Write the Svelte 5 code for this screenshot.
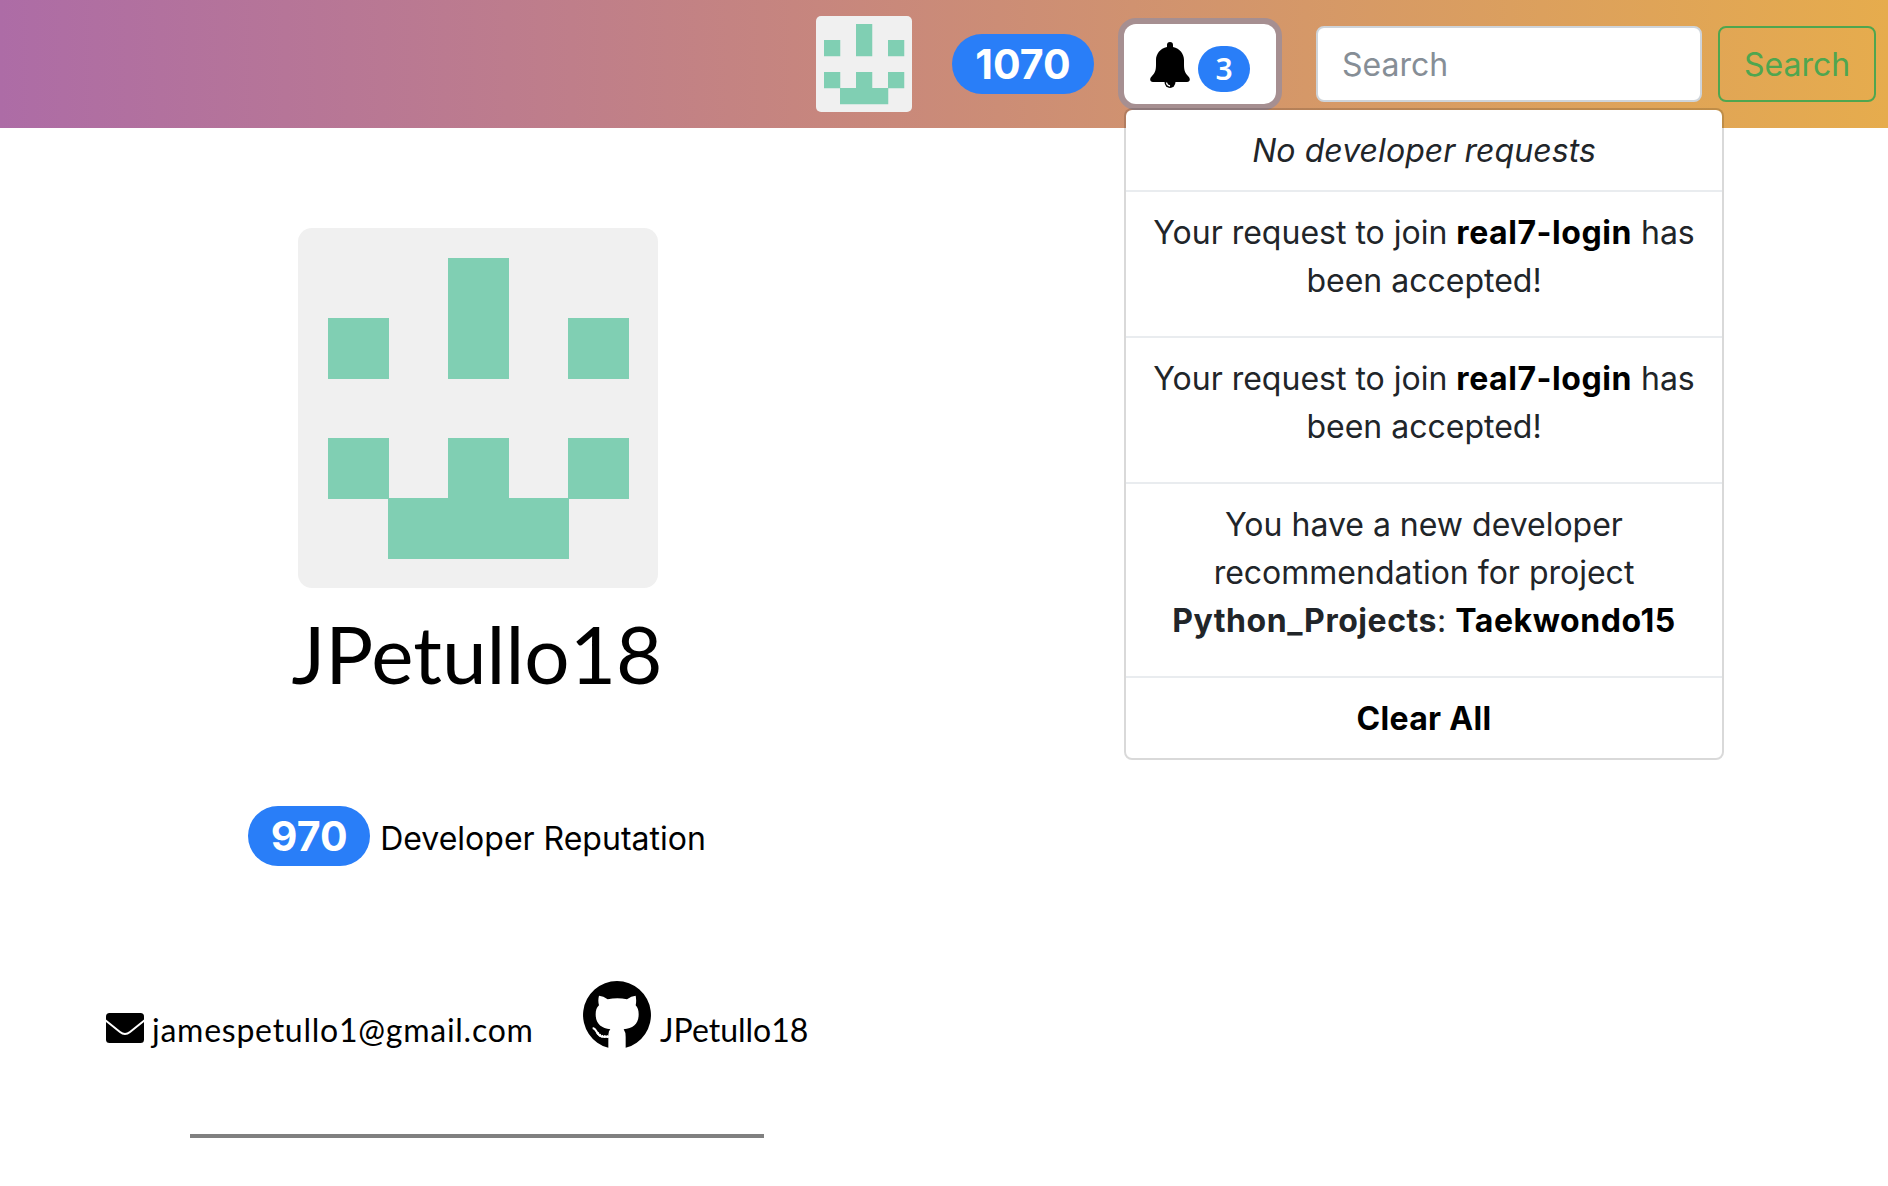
<script>
  const notices = [
    { before: 'Your request to join ', link: 'real7-login', after: ' has been accepted!' },
    { before: 'Your request to join ', link: 'real7-login', after: ' has been accepted!' }
  ];
</script>

{#snippet identicon()}
  <svg class="identicon" viewBox="0 0 360 360" aria-hidden="true">
    <rect width="360" height="360" fill="#f0f0f0" />
    <path fill="#80cfb3" d="M150 30h61v121h-61zM30 90h61v61H30zM270 90h61v61h-61zM30 210h61v61H30zM270 210h61v61h-61zM150 210h61v60h60v61H90v-61h60z" />
  </svg>
{/snippet}

<header class="navbar">
  <div class="nav-avatar">{@render identicon()}</div>
  <span class="badge score">1070</span>
  <div class="dropdown">
    <button class="bell-btn" aria-label="Notifications">
      <svg class="bell" viewBox="0 0 40 46">
        <path d="M20 0a3 3 0 0 0-3 3v2C10 6.500 6 12 6 18v5c0 6-1.500 8.500-4 11-3 3-2 6 1 6h34c3 0 4-3 1-6-2.500-2.500-4-5-4-11v-5c0-6-4-11.500-11-13V3a3 3 0 0 0-3-3z" />
        <path d="M14.500 40a5.500 6 0 0 0 11 0z" />
        <path d="M16.500 40.500q.3 3 3.500 3.500" fill="none" stroke="#fff" stroke-width="1.300" />
      </svg>
      <span class="badge count">3</span>
    </button>
    <div class="menu">
      <div class="item"><em>No developer requests</em></div>
      {#each notices as n}
        <div class="item"><p>{n.before}<b class="link">{n.link}</b>{n.after}</p></div>
      {/each}
      <div class="item">
        <p>You have a new developer recommendation for project <span class="pair"><b>Python_Projects</b>: <b class="link">Taekwondo15</b></span></p>
      </div>
      <div class="item"><b class="link clear">Clear All</b></div>
    </div>
  </div>
  <input class="search" placeholder="Search" />
  <button class="search-btn">Search</button>
</header>

<main class="profile">
  <div class="avatar">{@render identicon()}</div>
  <h1>JPetullo18</h1>
  <div class="reputation">
    <span class="badge dev">970</span>
    <span class="rep-label">Developer Reputation</span>
  </div>
  <div class="contacts">
    <svg class="mail" viewBox="0 0 38 30">
      <rect width="38" height="30" rx="3.500" />
      <path d="M-1 7 14 19q5 4 10 0L39 7" fill="none" stroke="#fff" stroke-width="2" />
    </svg>
    <span class="email">jamespetullo1@gmail.com</span>
    <svg class="github" viewBox="0 0 204 204">
      <path d="M102 0a102 102 0 0 1 26 200.600V168q0-15-6-23c28-3 45-16 45-45 0-12-3-20-9-27q3-13 0-29-13 0-26 11-29-6-58 0-13-11-26-11-4 15 0 29c-7 7-10 15-10 27 0 28 17 42 44 45q-5 4-6 16v39.600A102 102 0 0 1 102 0z" />
      <path d="M29 141c15 2 11 28 34 26h15" fill="none" stroke="#fff" stroke-width="6" />
      <path d="M43 155q8 13 32 12" fill="none" stroke="#fff" stroke-width="8" stroke-dasharray="5 3" />
    </svg>
    <span class="handle">JPetullo18</span>
  </div>
  <hr />
</main>

<style>
  :global(body) { background: #fff; overflow: hidden; }
  .navbar, .profile, button, input {
    font-family: Inter, "Liberation Sans", sans-serif;
    font-size: 32px;
    line-height: 48px;
  }
  .navbar {
    box-sizing: border-box;
    height: 128px;
    padding-right: 12px;
    display: flex;
    align-items: center;
    justify-content: flex-end;
    background: linear-gradient(90deg, #ad6ca6 0%, #c6857f 42%, #d09270 60%, #e6ac4d 100%);
  }
  .identicon { display: block; width: 100%; height: 100%; }
  .nav-avatar { width: 96px; height: 96px; border-radius: 5px; overflow: hidden; margin-right: 40px; }
  .badge {
    display: flex;
    align-items: center;
    justify-content: center;
    background: #297ef8;
    color: #fff;
    font-weight: 700;
    border-radius: 30px;
    white-space: nowrap;
  }
  .score { width: 142px; height: 60px; font-size: 41px; margin-right: 30px; }
  .dropdown { position: relative; margin-right: 40px; }
  .bell-btn {
    box-sizing: border-box;
    width: 152px;
    height: 80px;
    padding: 0 26px;
    border: 0;
    border-radius: 12px;
    background: #fff;
    box-shadow: 0 0 0 6px #a68f91;
    display: flex;
    align-items: center;
  }
  .bell { flex: none; width: 40px; height: 46px; margin: 2px 8px 0 0; }
  .count {
    flex: none;
    width: 52px;
    height: 46px;
    margin-top: 10px;
    border-radius: 23px;
    font: 600 30px/46px "Noto Sans", sans-serif;
  }
  .menu {
    position: absolute;
    top: 84px;
    left: 0;
    box-sizing: border-box;
    width: 600px;
    border: 2px solid rgba(0, 0, 0, 0.15);
    border-radius: 8px;
    background: #fff;
    background-clip: padding-box;
    color: #212529;
    text-align: center;
  }
  .item { padding: 17px 16px 15px; }
  .item + .item { border-top: 2px solid #e9ecef; }
  .item p { margin: 0 0 16px; }
  .item em { letter-spacing: 0.06px; }
  .menu b { letter-spacing: 0.55px; }
  .menu .clear { letter-spacing: 0.3px; }
  .link { color: #000; }
  .pair { white-space: nowrap; }
  .search {
    box-sizing: border-box;
    width: 386px;
    height: 76px;
    padding: 0 24px;
    border: 2px solid #ced4da;
    border-radius: 8px;
    margin: 0 16px 0 0;
    background: #fff;
  }
  .search::placeholder { color: #868e96; opacity: 1; }
  .search-btn {
    box-sizing: border-box;
    width: 158px;
    height: 76px;
    padding: 2px 0 0;
    border: 2px solid #4fa64f;
    border-radius: 8px;
    color: #4fa64f;
    background: transparent;
  }
  .profile {
    width: 954px;
    padding-top: 100px;
    display: flex;
    flex-direction: column;
    align-items: center;
    color: #000;
  }
  .avatar { width: 360px; height: 360px; margin-left: 2px; border-radius: 14px; overflow: hidden; }
  h1 {
    margin: 17px 0 0;
    font: 400 80px/96px Lato, "Noto Sans", sans-serif;
    white-space: nowrap;
  }
  .reputation { display: flex; align-items: center; height: 60px; margin-top: 105px; white-space: nowrap; }
  .dev { width: 122px; height: 60px; font-size: 41px; margin-right: 10px; }
  .rep-label { padding-top: 5px; }
  .contacts {
    align-self: flex-start;
    margin: 114px 0 0 106px;
    height: 70px;
    display: flex;
    align-items: center;
    font-family: Lato, "Noto Sans", sans-serif;
    white-space: nowrap;
  }
  .mail { width: 38px; height: 30px; margin: 25px 8px 0 0; }
  .email { width: 381px; margin-right: 50px; padding-top: 29px; letter-spacing: 0.75px; }
  .github { width: 68px; height: 68px; margin-right: 9px; }
  .handle { padding-top: 29px; }
  hr { width: 574px; height: 4px; margin: 84px 0 0; border: 0; background: #808080; }
</style>
